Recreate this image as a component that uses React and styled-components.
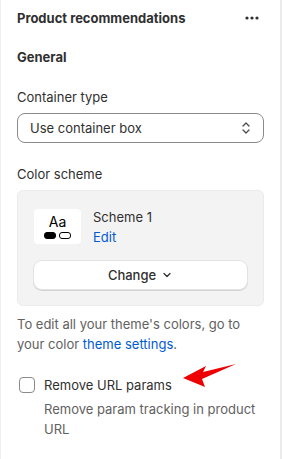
import React from "react"
import styled, { createGlobalStyle } from "styled-components"

const GlobalStyle = createGlobalStyle`
  body {
    margin: 0;
    background: #ffffff;
    font-family: Inter, "Noto Sans", sans-serif;
    color: #303030;
  }
`

const Panel = styled.div`
  width: 282px;
  height: 459px;
  border-left: 1px solid #f0f0f0;
  border-right: 2px solid #ebebeb;
  padding: 8px 16px 0 16px;
  box-sizing: border-box;
  overflow: hidden;
`

const Header = styled.div`
  display: flex;
  align-items: center;
  justify-content: space-between;
  height: 20px;
  padding-right: 5px;
`

const Title = styled.h2`
  margin: 0;
  font-size: 13px;
  font-weight: 650;
  line-height: 20px;
`

const Section = styled.h3`
  margin: 19px 0 0;
  font-size: 13px;
  font-weight: 650;
  line-height: 20px;
`

const Label = styled.div`
  margin-top: ${p => p.$top}px;
  font-size: 13px;
  line-height: 20px;
  color: #303030;
`

const Select = styled.div`
  margin-top: 6px;
  height: 30px;
  border: 1px solid #8a8a8a;
  border-radius: 8px;
  display: flex;
  align-items: center;
  justify-content: space-between;
  padding: 0 12px;
  box-sizing: border-box;
  font-size: 13px;
`

const SchemeBox = styled.div`
  margin-top: 6px;
  background: #f3f3f3;
  border: 1px solid #ebebeb;
  border-radius: 6px;
  padding: 18px 16px 16px;
`

const SchemeRow = styled.div`
  display: flex;
  align-items: flex-start;
  gap: 12px;
`

const Swatch = styled.div`
  width: 47px;
  height: 35px;
  background: #ffffff;
  border-radius: 4px;
  display: flex;
  flex-direction: column;
  align-items: center;
  justify-content: center;
  font-size: 14px;
  line-height: 14px;
  color: #000;
`

const Pills = styled.div`
  display: flex;
  gap: 3px;
  margin-top: 3px;
`

const Pill = styled.span`
  width: 10px;
  height: 5px;
  border-radius: 3px;
  border: 1px solid #000;
  background: ${p => (p.$filled ? "#000" : "#fff")};
`

const SchemeText = styled.div`
  font-size: 13px;
  line-height: 20px;
  margin-top: -2px;
`

const Link = styled.a`
  color: #005bd3;
  text-decoration: none;
`

const ChangeButton = styled.button`
  margin-top: 14px;
  width: 100%;
  height: 28px;
  background: #ffffff;
  border: none;
  border-radius: 8px;
  box-shadow: 0 0 0 1px #e3e3e3, 0 1px 0 1px #d4d4d4;
  font-family: inherit;
  font-size: 13px;
  font-weight: 500;
  color: #303030;
  display: flex;
  align-items: center;
  justify-content: center;
  gap: 5px;
`

const HelpText = styled.p`
  margin: ${p => p.$top || 0}px 0 0 ${p => p.$indent || 0}px;
  font-size: 13px;
  line-height: 20px;
  color: #616161;
`

const CheckRow = styled.div`
  margin-top: 21px;
  display: flex;
  align-items: center;
  gap: 9px;
  position: relative;
`

const Checkbox = styled.span`
  width: 16px;
  height: 16px;
  margin-left: 2px;
  box-sizing: border-box;
  border: 1px solid #8a8a8a;
  border-radius: 4px;
  background: #fff;
`

const CheckLabel = styled.span`
  font-size: 13px;
  line-height: 20px;
`

const Arrow = styled.svg`
  position: absolute;
  left: 164px;
  top: -13px;
`

const App = () => (
  <>
    <GlobalStyle />
    <Panel>
      <Header>
        <Title>Product recommendations</Title>
        <svg width="14" height="4" viewBox="0 0 14 4">
          <circle cx="2" cy="2" r="1.6" fill="#303030" />
          <circle cx="7" cy="2" r="1.6" fill="#303030" />
          <circle cx="12" cy="2" r="1.6" fill="#303030" />
        </svg>
      </Header>
      <Section>General</Section>
      <Label $top={20}>Container type</Label>
      <Select>
        <span>Use container box</span>
        <svg width="10" height="14" viewBox="0 0 10 14" fill="none" stroke="#4a4a4a" strokeWidth="1.3" strokeLinecap="round" strokeLinejoin="round">
          <path d="M2 5 L5 2 L8 5" />
          <path d="M2 9 L5 12 L8 9" />
        </svg>
      </Select>
      <Label $top={21}>Color scheme</Label>
      <SchemeBox>
        <SchemeRow>
          <Swatch>
            Aa
            <Pills>
              <Pill $filled />
              <Pill />
            </Pills>
          </Swatch>
          <SchemeText>
            <div>Scheme 1</div>
            <Link href="#">Edit</Link>
          </SchemeText>
        </SchemeRow>
        <ChangeButton>
          Change
          <svg width="12" height="12" viewBox="0 0 12 12" fill="none" stroke="#303030" strokeWidth="1.3" strokeLinecap="round" strokeLinejoin="round">
            <path d="M3 4.5 L6 7.5 L9 4.5" />
          </svg>
        </ChangeButton>
      </SchemeBox>
      <HelpText $top={8}>
        To edit all your theme's colors, go to your color <Link href="#">theme settings</Link>.
      </HelpText>
      <CheckRow>
        <Checkbox />
        <CheckLabel>Remove URL params</CheckLabel>
        <Arrow width="56" height="26" viewBox="0 0 56 26">
          <path d="M55 2 L22 10 L25 4 L2 16 L24 25 L21 17 Z" fill="#ee0000" />
        </Arrow>
      </CheckRow>
      <HelpText $top={4} $indent={27}>Remove param tracking in product URL</HelpText>
    </Panel>
  </>
)

export default App
